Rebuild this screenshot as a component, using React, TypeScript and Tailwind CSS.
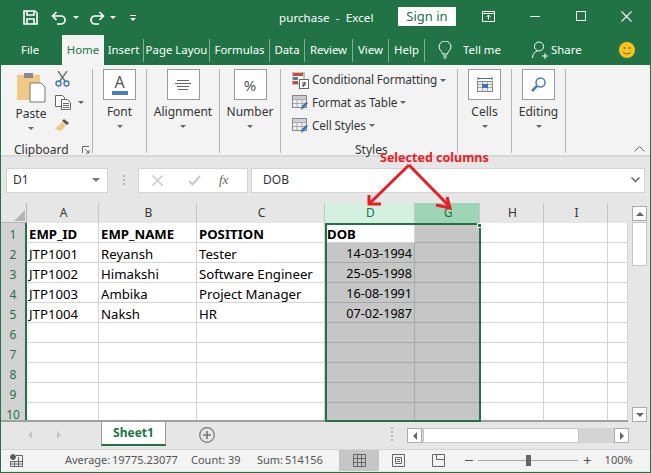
import type { ReactNode } from 'react';

const TABS = [
  { label: 'Insert', w: 40 },
  { label: 'Page Layou', w: 66 },
  { label: 'Formulas', w: 60 },
  { label: 'Data', w: 35 },
  { label: 'Review', w: 48 },
  { label: 'View', w: 36 },
  { label: 'Help', w: 36 },
];

const COLUMNS = [
  { id: 'A', cls: 'w-[72px] bg-[#e6e6e6] text-[#333]' },
  { id: 'B', cls: 'w-[98px] bg-[#e6e6e6] text-[#333]' },
  { id: 'C', cls: 'w-[128px] bg-[#e6e6e6] text-[#333]' },
  { id: 'D', cls: 'w-[90px] bg-[#d3f0e0] text-[#217346]' },
  { id: 'G', cls: 'w-[65px] bg-[#9fd5b7] text-[#217346]' },
  { id: 'H', cls: 'w-[64px] bg-[#e6e6e6] text-[#333]' },
  { id: 'I', cls: 'w-[64px] bg-[#e6e6e6] text-[#333]' },
];

const ROWS = [
  ['EMP_ID', 'EMP_NAME', 'POSITION', 'DOB'],
  ['JTP1001', 'Reyansh', 'Tester', '14-03-1994'],
  ['JTP1002', 'Himakshi', 'Software Engineer', '25-05-1998'],
  ['JTP1003', 'Ambika', 'Project Manager', '16-08-1991'],
  ['JTP1004', 'Naksh', 'HR', '07-02-1987'],
  [], [], [], [], [],
];

const STATS = [
  { label: 'Average:', value: '19775.23077', w: 126, gap: 'w-[47px]' },
  { label: 'Count:', value: '39', w: 66, gap: 'w-[37px]' },
  { label: 'Sum:', value: '514156', w: 82, gap: 'w-[28px]' },
];

function Caret({ className = '' }: { className?: string }) {
  return <span className={`inline-block w-0 h-0 border-x-[3px] border-x-transparent border-t-[3px] border-t-[#666] ${className}`} />;
}

function BigGroup({ label, w, children }: { label: string; w: number; children: ReactNode }) {
  return (
    <div className="flex flex-col items-center h-[84px] border-r border-[#b5b5b5] shrink-0" style={{ width: w }}>
      <div className="flex flex-col items-center justify-center w-[33px] h-[31px] bg-white border border-[#9a9a9a]">
        {children}
      </div>
      <div className="mt-[3px] text-[12px] leading-[18px] text-[#333]">{label}</div>
      <Caret className="mt-[4px]" />
    </div>
  );
}

function StyleRow({ icon, label, first }: { icon: ReactNode; label: string; first?: boolean }) {
  return (
    <div className={`flex items-center ${first ? 'h-[22px]' : 'h-[23px]'}`}>
      <span className="w-[18px] h-[16px] mr-[2px]">{icon}</span>
      <span className="text-[11.7px] text-[#333] tracking-[-0.1px]">{label}</span>
      <Caret className="ml-[3px]" />
    </div>
  );
}

function TableIcon({ accent }: { accent: string }) {
  return (
    <svg width="17" height="16" viewBox="0 0 17 16">
      <rect x="0.5" y="0.5" width="14" height="12" fill="#eee" stroke="#888" />
      <path d="M5 1v11M10 1v11M1 4.5h13M1 8.5h13" stroke="#aaa" />
      <rect x="1" y="1" width="13" height="3" fill={accent} />
      <path d="M9 15l1-4 4-4 2 1-4 5z" fill="#3c72b4" />
    </svg>
  );
}

function Cell({ w, bold, children }: { w: number; bold?: boolean; children?: ReactNode }) {
  return (
    <div
      className={`flex items-center pl-[2px] pt-[4px] overflow-hidden whitespace-nowrap border-r border-b border-[#d4d4d4] ${bold ? 'font-bold' : ''}`}
      style={{ width: w }}
    >
      {children}
    </div>
  );
}

export default function App() {
  return (
    <div className="relative w-[651px] h-[473px] overflow-hidden bg-[#e6e6e6] border-x border-b border-[#217346] font-['Noto_Sans','Open_Sans',sans-serif]">
      {/* Title bar */}
      <div className="flex items-center h-[35px] -mx-px bg-[#217346] text-white text-[11.5px]">
        <svg className="ml-[23px]" width="15" height="15" viewBox="0 0 15 15" fill="none" stroke="#fff" strokeWidth="1.6">
          <path d="M1 1h11l2 2v11H1z" />
          <path d="M4 1v4h7V1M4 14V9h7v5" />
        </svg>
        <svg className="ml-[13px]" width="16" height="14" viewBox="0 0 16 14" fill="none" stroke="#fff" strokeWidth="1.7">
          <path d="M5.5 1L1.5 5l4 4M2 5h8a4 4 0 0 1 0 8H6" />
        </svg>
        <Caret className="ml-[6px] !border-t-white" />
        <svg className="ml-[10px]" width="16" height="14" viewBox="0 0 16 14" fill="none" stroke="#fff" strokeWidth="1.7">
          <path d="M10.5 1l4 4-4 4M14 5H6a4 4 0 0 0 0 8h4" />
        </svg>
        <Caret className="ml-[5px] !border-t-white" />
        <span className="ml-[14px] flex flex-col items-center w-[6px] gap-[2px]">
          <span className="w-[6px] h-px bg-white" />
          <Caret className="!border-t-white" />
        </span>
        <span className="ml-[143px] w-[100px] whitespace-nowrap tracking-[0.1px]">purchase&nbsp; -&nbsp; Excel</span>
        <span className="ml-[19px] -mt-[2px] flex items-center justify-center w-[58px] h-[19px] bg-white text-[#217346] text-[13px]">Sign in</span>
        <svg className="ml-[26px] -mt-[3px]" width="13" height="11" viewBox="0 0 13 11" fill="none" stroke="#fff">
          <path d="M.5.5h12v10H.5zM1 2.500h11M6.500 8.500V4.500M4.500 6l2-2 2 2" />
        </svg>
        <span className="ml-[35px] -mt-[3px] w-[10px] h-px bg-white" />
        <span className="ml-[36px] -mt-[3px] w-[10px] h-[10px] border border-white" />
        <svg className="ml-[35px] -mt-[3px]" width="11" height="11" viewBox="0 0 11 11" stroke="#fff" strokeWidth="1.1">
          <path d="M.5.5l10 10M10.500.5l-10 10" />
        </svg>
      </div>

      {/* Tabs */}
      <div className="flex items-center h-[30px] -mx-px bg-[#217346] text-white text-[11.4px]">
        <span className="w-[62px] pl-[21px]">File</span>
        <span className="flex items-center justify-center w-[42px] h-[30px] bg-[#f3f3f3] text-[#217346]">Home</span>
        {TABS.map(t => (
          <span
            key={t.label}
            className="flex items-center justify-center h-[23px] whitespace-nowrap border-r border-[#7fb096]"
            style={{ width: t.w }}
          >
            {t.label}
          </span>
        ))}
        <svg className="ml-[13px]" width="14" height="18" viewBox="0 0 14 18" fill="none" stroke="#fff">
          <path d="M4.500 13c0-2.500-3.500-4-3.500-7a6 6 0 0 1 12 0c0 3-3.500 4.500-3.500 7zM5 15h4M5.500 17h3" />
        </svg>
        <span className="ml-[11px] w-[60px]">Tell me</span>
        <svg className="ml-[9px]" width="16" height="18" viewBox="0 0 16 18" fill="none" stroke="#fff">
          <circle cx="7" cy="5.500" r="4.500" />
          <path d="M.5 17c0-4 2-6 4.500-7M10 15h6M13 12v6" />
        </svg>
        <span className="ml-[3px] w-[30px]">Share</span>
        <svg className="ml-[38px]" width="16" height="16" viewBox="0 0 16 16">
          <circle cx="8" cy="8" r="8" fill="#fcc419" />
          <circle cx="5.500" cy="6" r="1" fill="#7a5b00" />
          <circle cx="10.500" cy="6" r="1" fill="#7a5b00" />
          <path d="M4 10c2 2.500 6 2.500 8 0" fill="none" stroke="#7a5b00" />
        </svg>
      </div>

      {/* Ribbon */}
      <div className="relative flex h-[92px] pt-[4px] bg-[#f3f3f3] border-b-2 border-[#d8d8d8]">
        {/* Clipboard */}
        <div className="relative flex w-[92px] h-[84px] border-r border-[#b5b5b5] shrink-0">
          <div className="flex flex-col items-center w-[52px] pl-[8px]">
            <svg className="mt-[3px]" width="30" height="31" viewBox="0 0 30 31">
              <path d="M1 3h23v25H1z" fill="#f0c987" />
              <path d="M8 1h9v5H8z" fill="#8a8a8a" />
              <path d="M14 11h11l4 4v15H14z" fill="#fff" stroke="#777" />
            </svg>
            <span className="mt-[3px] text-[12px] leading-[16px] text-[#333]">Paste</span>
            <Caret className="mt-[5px]" />
          </div>
          <div className="flex flex-col gap-[8px] pt-[2px] pl-[2px]">
            <svg width="15" height="16" viewBox="0 0 15 16" fill="none">
              <path d="M3 0l7 10M12 0L5 10" stroke="#777" strokeWidth="1.500" />
              <circle cx="3.500" cy="12.500" r="2.500" stroke="#3c72b4" strokeWidth="1.300" />
              <circle cx="11.500" cy="12.500" r="2.500" stroke="#3c72b4" strokeWidth="1.300" />
            </svg>
            <div className="flex items-center">
              <svg width="16" height="15" viewBox="0 0 16 15" fill="#fff" stroke="#666">
                <path d="M.5.5h7l2 2v9h-9z" />
                <path d="M6.500 4.500h6l3 3v7h-9zM8 8.500h6M8 10.500h6M8 12.500h6" />
              </svg>
              <Caret className="ml-[7px]" />
            </div>
            <svg width="16" height="14" viewBox="0 0 16 14">
              <path d="M9 1l5 4-2 2-5-4z" fill="#555" />
              <path d="M7 4l4 3-5 6-6-2 3-3z" fill="#f0c987" />
            </svg>
          </div>
          <span className="absolute left-[13px] top-[72px] text-[12px] leading-[18px] text-[#333]">Clipboard</span>
          <svg className="absolute left-[81px] top-[77px]" width="8" height="8" viewBox="0 0 8 8" fill="none" stroke="#666">
            <path d="M.5 7V.5H7M3 3l4 4M4 7h3V4" />
          </svg>
        </div>

        <BigGroup label="Font" w={54}>
          <span className="text-[16px] leading-[17px] text-[#555]">A</span>
          <span className="w-[16px] h-[4px] bg-[#4a7ebb]" />
        </BigGroup>
        <BigGroup label="Alignment" w={73}>
          <svg width="16" height="12" viewBox="0 0 16 12" stroke="#666">
            <path d="M2 1.500h12M0 4.500h16M2 7.500h12M3 10.500h10" />
          </svg>
        </BigGroup>
        <BigGroup label="Number" w={61}>
          <span className="text-[15px] leading-[20px] text-[#555]">%</span>
        </BigGroup>

        {/* Styles */}
        <div className="relative w-[177px] h-[84px] pl-[11px] border-r border-[#b5b5b5] shrink-0">
          <StyleRow
            first
            label="Conditional Formatting"
            icon={
              <svg width="17" height="17" viewBox="0 0 17 17">
                <rect x="0" y="0" width="12" height="12" fill="#fff" stroke="#888" />
                <rect x="1" y="1" width="5" height="3" fill="#d2492a" />
                <rect x="6" y="1" width="5" height="3" fill="#d2492a" />
                <rect x="1" y="5" width="5" height="3" fill="#4a7ebb" />
                <rect x="1" y="9" width="5" height="3" fill="#d2492a" />
                <rect x="7.500" y="7.500" width="9" height="9" fill="#fff" stroke="#666" />
                <path d="M10 11h4M10 13h4M13 10l-2 5" stroke="#444" />
              </svg>
            }
          />
          <StyleRow label="Format as Table" icon={<TableIcon accent="#ccc" />} />
          <StyleRow label="Cell Styles" icon={<TableIcon accent="#c5d3e6" />} />
          <span className="absolute left-[74px] top-[72px] text-[12px] leading-[18px] text-[#333]">Styles</span>
        </div>

        <BigGroup label="Cells" w={54}>
          <svg width="16" height="17" viewBox="0 0 16 17" fill="none">
            <path d="M1 1v3M15 1v3M1 2.500h14" stroke="#3c72b4" />
            <rect x=".5" y="5.500" width="15" height="10" fill="#eee" stroke="#888" />
            <path d="M5.500 6v9M10.500 6v9M1 8.500h14M1 11.500h14" stroke="#aaa" />
            <rect x="5" y="8" width="6" height="4" fill="#3c72b4" />
          </svg>
        </BigGroup>
        <BigGroup label="Editing" w={54}>
          <svg width="15" height="15" viewBox="0 0 15 15" fill="none" stroke="#4a7ebb">
            <circle cx="9.500" cy="5.500" r="4.500" strokeWidth="1.500" />
            <path d="M6 9l-5 5" strokeWidth="2.500" />
          </svg>
        </BigGroup>

        <svg className="absolute right-[5px] bottom-[3px]" width="11" height="6" viewBox="0 0 11 6" fill="none" stroke="#666">
          <path d="M.5 5.500l5-5 5 5" />
        </svg>
      </div>

      {/* Formula bar */}
      <div className="flex items-center h-[46px] pl-[5px] pr-[5px]">
        <div className="flex items-center justify-between w-[102px] h-[25px] pl-[6px] pr-[7px] bg-white border border-[#d4d4d4] text-[12px] text-[#333]">
          D1
          <span className="w-0 h-0 border-x-[4px] border-x-transparent border-t-[4px] border-t-[#777]" />
        </div>
        <span className="flex flex-col gap-[2px] ml-[15px] w-[2px]">
          <span className="h-[2px] bg-[#b5b5b5]" />
          <span className="h-[2px] bg-[#b5b5b5]" />
          <span className="h-[2px] bg-[#b5b5b5]" />
        </span>
        <div className="flex items-center w-[110px] h-[25px] ml-[13px] bg-white border border-[#d4d4d4]">
          <svg className="ml-[13px]" width="11" height="11" viewBox="0 0 11 11" stroke="#c8c8c8" strokeWidth="1.500">
            <path d="M.5.5l10 10M10.500.5l-10 10" />
          </svg>
          <svg className="ml-[25px]" width="13" height="11" viewBox="0 0 13 11" fill="none" stroke="#c8c8c8" strokeWidth="2">
            <path d="M1 6l3.500 3.500L12 1" />
          </svg>
          <span className="ml-[18px] font-['Liberation_Serif',serif] italic text-[13px] text-[#666]">fx</span>
        </div>
        <div className="flex items-center justify-between w-[394px] h-[25px] ml-[3px] pl-[11px] pr-[4px] bg-white border border-[#d4d4d4] text-[12px] text-[#333]">
          DOB
          <svg width="9" height="6" viewBox="0 0 9 6" fill="none" stroke="#666" strokeWidth="1.500">
            <path d="M.5.500l4 4 4-4" />
          </svg>
        </div>
      </div>

      {/* Sheet + vertical scrollbar */}
      <div className="flex h-[219px]">
        <div className="w-[627px] bg-white border-b-2 border-[#a0a0a0] overflow-hidden shrink-0">
          <div className="flex h-[20px] bg-[#e6e6e6] text-[12px]">
            <div className="flex items-end justify-end w-[26px] pr-[1px] pb-[1px] border-r border-[#b5b5b5] border-b">
              <span className="w-0 h-0 border-l-[11px] border-l-transparent border-b-[11px] border-b-[#b5b5b5]" />
            </div>
            {COLUMNS.map(c => (
              <div key={c.id} className={`flex items-center justify-center pl-[2px] border-r border-[#c6c6c6] ${c.cls}`}>{c.id}</div>
            ))}
            <div className="w-[20px]" />
          </div>
          {ROWS.map((r, i) => (
            <div key={i} className="flex h-[20px] text-[13.2px] text-black">
              <div className="flex items-center justify-center w-[26px] pt-[4px] bg-[#d2d2d2] text-[#217346] border-r-2 border-[#217346] text-[12px]">{i + 1}</div>
              <Cell w={72} bold={i === 0}>{r[0]}</Cell>
              <Cell w={98} bold={i === 0}>{r[1]}</Cell>
              <Cell w={128} bold={i === 0}>{r[2]}</Cell>
              {i === 0 ? (
                <Cell w={90} bold>{r[3]}</Cell>
              ) : (
                <div className="flex items-center justify-end w-[90px] pr-[2px] pt-[4px] text-[12.6px] bg-[#c6c6c6] border-r border-b border-[#a8a8a8]">{r[3]}</div>
              )}
              <div className="w-[65px] bg-[#c6c6c6] border-r border-b border-[#a8a8a8]" />
              <Cell w={64} />
              <Cell w={64} />
              <Cell w={20} />
            </div>
          ))}
        </div>

        {/* Vertical scrollbar */}
        <div className="flex flex-col w-[23px] h-[219px] pl-[4px] pr-[3px] pt-[3px]">
          <div className="flex items-center justify-center h-[15px] bg-white border border-[#ababab]">
            <span className="w-0 h-0 border-x-[4px] border-x-transparent border-b-[4px] border-b-[#666]" />
          </div>
          <div className="h-[44px] mt-px bg-white border border-[#c6c6c6]" />
          <div className="flex-1" />
          <div className="flex items-center justify-center h-[15px] bg-white border border-[#ababab]">
            <span className="w-0 h-0 border-x-[4px] border-x-transparent border-t-[4px] border-t-[#666]" />
          </div>
        </div>
      </div>

      {/* Sheet tabs */}
      <div className="flex h-[27px]">
        <span className="flex items-center w-[24px] ml-[27px] h-[25px]">
          <span className="w-0 h-0 border-y-[4px] border-y-transparent border-r-[4px] border-r-[#c6c6c6]" />
        </span>
        <span className="flex items-center w-[44px] ml-[5px] h-[25px]">
          <span className="w-0 h-0 border-y-[4px] border-y-transparent border-l-[4px] border-l-[#c6c6c6]" />
        </span>
        <div className="flex justify-center items-center w-[65px] h-[24px] bg-white border-x border-b-2 border-x-[#9a9a9a] border-b-[#217346] text-[12px] font-bold text-[#217346]">Sheet1</div>
        <svg className="ml-[33px] mt-[5px]" width="16" height="16" viewBox="0 0 16 16" fill="none" stroke="#777">
          <circle cx="8" cy="8" r="7.300" strokeWidth="1.200" />
          <path d="M8 4v8M4 8h8" strokeWidth="1.600" />
        </svg>
        <span className="flex flex-col gap-[2px] ml-[176px] mt-[5px] w-[2px]">
          <span className="h-[2px] bg-[#b5b5b5]" />
          <span className="h-[2px] bg-[#b5b5b5]" />
          <span className="h-[2px] bg-[#b5b5b5]" />
          <span className="h-[2px] bg-[#b5b5b5]" />
        </span>
        <div className="flex items-stretch w-[222px] h-[15px] ml-[14px] mt-[6px] bg-[#d4d4d4]">
          <div className="flex items-center justify-center w-[15px] bg-white border border-[#ababab]">
            <span className="w-0 h-0 border-y-[4px] border-y-transparent border-r-[4px] border-r-[#666]" />
          </div>
          <div className="w-[156px] ml-px bg-white border border-[#c6c6c6]" />
          <div className="flex-1" />
          <div className="flex items-center justify-center w-[15px] bg-white border border-[#ababab]">
            <span className="w-0 h-0 border-y-[4px] border-y-transparent border-l-[4px] border-l-[#666]" />
          </div>
        </div>
      </div>

      {/* Status bar */}
      <div className="flex items-center h-[22px] bg-[#f3f3f3] border-t border-[#d4d4d4] text-[11px] text-[#555]">
        <svg className="ml-[9px]" width="13" height="13" viewBox="0 0 13 13" fill="none" stroke="#666">
          <circle cx="3" cy="3" r="2.500" fill="#555" />
          <path d="M6 1.500h6.500v11H.5V7M1 7.500h11M1 10h11M4.500 7v5M8.500 3v9" />
        </svg>
        <span className="w-[42px] shrink-0" />
        {STATS.map(s => (
          <span key={s.label} className="flex whitespace-nowrap shrink-0" style={{ width: s.w }}>
            <span className={s.gap}>{s.label}</span>
            {s.value}
          </span>
        ))}
        <div className="flex items-center justify-center w-[40px] h-[21px] bg-[#c6c6c6]">
          <svg width="13" height="13" viewBox="0 0 13 13" fill="none" stroke="#666">
            <path d="M.5.5h12v12H.5zM4.500 1v12M8.500 1v12M1 4.500h12M1 8.500h12" />
          </svg>
        </div>
        <svg className="ml-[13px]" width="13" height="13" viewBox="0 0 13 13" fill="none" stroke="#666">
          <path d="M.5.5h12v12H.5zM3.500 3.500h6v6h-6zM5 5.500h3M5 7.500h3" />
        </svg>
        <svg className="ml-[27px]" width="13" height="13" viewBox="0 0 13 13" fill="none" stroke="#666">
          <path d="M.5.5h12v12H.5zM4.500.5v5h8" />
        </svg>
        <span className="ml-[20px] w-[8px] h-[1.500px] bg-[#555]" />
        <div className="relative flex items-center w-[100px] ml-[5px]">
          <span className="w-full h-px bg-[#a8a8a8]" />
          <span className="absolute left-[48px] top-[-5px] w-[5px] h-[11px] bg-[#666]" />
        </div>
        <span className="ml-[5px] text-[15px] leading-none">+</span>
        <span className="ml-[13px] text-[11px]">100%</span>
      </div>

      {/* Selection outline */}
      <div className="absolute left-[324px] top-[223px] w-[156px] h-[199px] border-2 border-[#217346] pointer-events-none">
        <span className="absolute -top-[2px] -right-[3px] w-[5px] h-[5px] bg-[#217346] border border-white" />
      </div>

      {/* Annotation */}
      <span className="absolute left-[379px] top-[149px] text-[12.5px] font-bold text-[#ed1c24] whitespace-nowrap">Selected columns</span>
      <svg className="absolute left-[360px] top-[160px]" width="100" height="50" viewBox="0 0 100 50" fill="none" stroke="#ed1c24" strokeWidth="3">
        <path d="M48 5L9 43M48 5l41 42" />
        <path d="M8 35v9h12M75 45l14 3-3-11" />
      </svg>
    </div>
  );
}
